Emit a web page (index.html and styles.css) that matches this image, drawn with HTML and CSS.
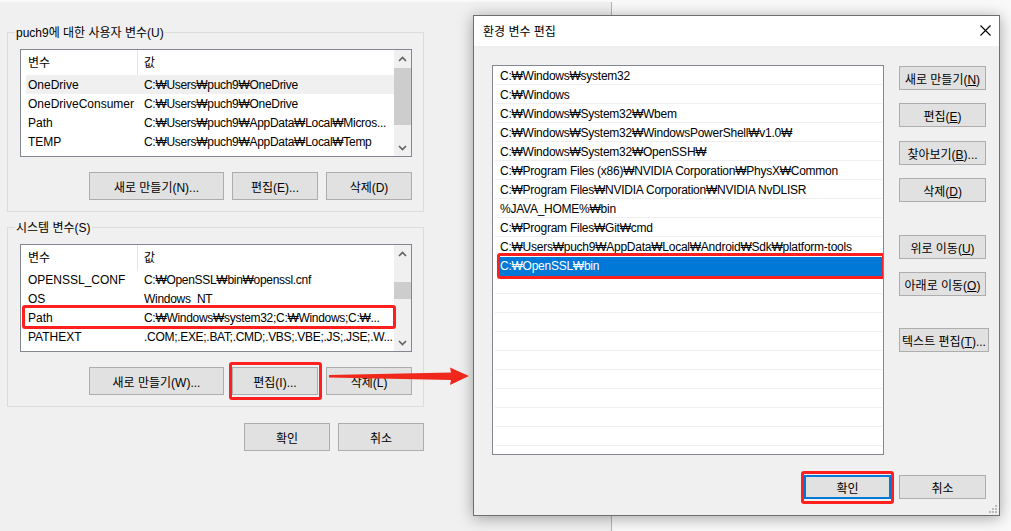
FILE: index.html
```html
<!DOCTYPE html>
<html lang="ko">
<head>
    <meta charset="UTF-8">
    <title>환경 변수 편집</title>
    <link rel="stylesheet" href="styles.css">
</head>
<body>

<div class="desktop">

    <!-- 환경 변수 창 (뒤쪽) -->
    <div class="main-window">

        <div class="group">
            <span class="group-title">puch9에 대한 사용자 변수(U)</span>
            <div class="listview">
                <div class="lv-body">
                    <div class="lv-header">
                        <span class="h-name">변수</span>
                        <span class="h-value">값</span>
                    </div>
                    <div class="lv-rows">
                        <div class="lv-row hot"><span class="c-name">OneDrive</span><span class="c-value">C:₩Users₩puch9₩OneDrive</span></div>
                        <div class="lv-row"><span class="c-name">OneDriveConsumer</span><span class="c-value">C:₩Users₩puch9₩OneDrive</span></div>
                        <div class="lv-row"><span class="c-name">Path</span><span class="c-value">C:₩Users₩puch9₩AppData₩Local₩Micros...</span></div>
                        <div class="lv-row"><span class="c-name">TEMP</span><span class="c-value">C:₩Users₩puch9₩AppData₩Local₩Temp</span></div>
                    </div>
                </div>
                <div class="scrollbar">
                    <div class="sb-btn"><svg width="9" height="6" viewBox="0 0 9 6"><path d="M1 5 L4.5 1.5 L8 5" fill="none" stroke="#606060" stroke-width="1.6"/></svg></div>
                    <div class="sb-track"><div class="sb-thumb thumb-user"></div></div>
                    <div class="sb-btn"><svg width="9" height="6" viewBox="0 0 9 6"><path d="M1 1 L4.5 4.5 L8 1" fill="none" stroke="#606060" stroke-width="1.6"/></svg></div>
                </div>
            </div>
            <div class="btn-row">
                <button class="btn wide">새로 만들기(N)...</button>
                <button class="btn">편집(E)...</button>
                <button class="btn">삭제(D)</button>
            </div>
        </div>

        <div class="group">
            <span class="group-title">시스템 변수(S)</span>
            <div class="listview">
                <div class="lv-body">
                    <div class="lv-header">
                        <span class="h-name">변수</span>
                        <span class="h-value">값</span>
                    </div>
                    <div class="lv-rows">
                        <div class="lv-row"><span class="c-name">OPENSSL_CONF</span><span class="c-value">C:₩OpenSSL₩bin₩openssl.cnf</span></div>
                        <div class="lv-row"><span class="c-name">OS</span><span class="c-value">Windows_NT</span></div>
                        <div class="lv-row marked-row"><span class="c-name">Path</span><span class="c-value">C:₩Windows₩system32;C:₩Windows;C:₩...</span></div>
                        <div class="lv-row"><span class="c-name">PATHEXT</span><span class="c-value">.COM;.EXE;.BAT;.CMD;.VBS;.VBE;.JS;.JSE;.W...</span></div>
                    </div>
                </div>
                <div class="scrollbar">
                    <div class="sb-btn"><svg width="9" height="6" viewBox="0 0 9 6"><path d="M1 5 L4.5 1.5 L8 5" fill="none" stroke="#606060" stroke-width="1.6"/></svg></div>
                    <div class="sb-track"><div class="sb-thumb thumb-system"></div></div>
                    <div class="sb-btn"><svg width="9" height="6" viewBox="0 0 9 6"><path d="M1 1 L4.5 4.5 L8 1" fill="none" stroke="#606060" stroke-width="1.6"/></svg></div>
                </div>
            </div>
            <div class="btn-row">
                <button class="btn wide">새로 만들기(W)...</button>
                <span class="marked"><button class="btn">편집(I)...</button></span>
                <button class="btn">삭제(L)</button>
            </div>
        </div>

        <div class="window-actions">
            <button class="btn">확인</button>
            <button class="btn">취소</button>
        </div>
    </div>

    <!-- 환경 변수 편집 대화 상자 -->
    <div class="edit-dialog">
        <div class="titlebar">
            <span class="title">환경 변수 편집</span>
            <svg class="close" width="11" height="11" viewBox="0 0 11 11"><path d="M0.5 0.5 L10.5 10.5 M10.5 0.5 L0.5 10.5" stroke="#000" stroke-width="1.1"/></svg>
        </div>
        <div class="dlg-body">
            <div class="dlg-main">
                <div class="path-list">
                    <div class="path-row">C:₩Windows₩system32</div>
                    <div class="path-row">C:₩Windows</div>
                    <div class="path-row">C:₩Windows₩System32₩Wbem</div>
                    <div class="path-row">C:₩Windows₩System32₩WindowsPowerShell₩v1.0₩</div>
                    <div class="path-row">C:₩Windows₩System32₩OpenSSH₩</div>
                    <div class="path-row">C:₩Program Files (x86)₩NVIDIA Corporation₩PhysX₩Common</div>
                    <div class="path-row">C:₩Program Files₩NVIDIA Corporation₩NVIDIA NvDLISR</div>
                    <div class="path-row">%JAVA_HOME%₩bin</div>
                    <div class="path-row">C:₩Program Files₩Git₩cmd</div>
                    <div class="path-row">C:₩Users₩puch9₩AppData₩Local₩Android₩Sdk₩platform-tools</div>
                    <div class="path-row selected">C:₩OpenSSL₩bin</div>
                    <div class="path-row"></div>
                    <div class="path-row"></div>
                    <div class="path-row"></div>
                    <div class="path-row"></div>
                    <div class="path-row"></div>
                    <div class="path-row"></div>
                    <div class="path-row"></div>
                    <div class="path-row"></div>
                    <div class="path-row"></div>
                </div>
                <div class="side-buttons">
                    <button class="btn small first">새로 만들기(<u>N</u>)</button>
                    <button class="btn small">편집(<u>E</u>)</button>
                    <button class="btn small gap14">찾아보기(<u>B</u>)...</button>
                    <button class="btn small">삭제(<u>D</u>)</button>
                    <button class="btn small gap-big">위로 이동(<u>U</u>)</button>
                    <button class="btn small">아래로 이동(<u>O</u>)</button>
                    <button class="btn small text-edit gap-big2">텍스트 편집(<u>T</u>)...</button>
                </div>
            </div>
            <div class="dlg-footer">
                <span class="marked ok-mark"><button class="btn small default">확인</button></span>
                <button class="btn small">취소</button>
            </div>
        </div>
        <svg class="grip" width="9" height="9" viewBox="0 0 9 9">
            <rect x="7" y="1" width="2" height="2" fill="#bcbcbc"/>
            <rect x="4" y="4" width="2" height="2" fill="#bcbcbc"/>
            <rect x="7" y="4" width="2" height="2" fill="#bcbcbc"/>
            <rect x="1" y="7" width="2" height="2" fill="#bcbcbc"/>
            <rect x="4" y="7" width="2" height="2" fill="#bcbcbc"/>
            <rect x="7" y="7" width="2" height="2" fill="#bcbcbc"/>
        </svg>
    </div>

    <svg class="arrow" width="1011" height="531" viewBox="0 0 1011 531">
        <polygon points="329,375 451,372.5 450,367.5 469,376 450,385 451,380 329,377.5" fill="#f0281c"/>
    </svg>
</div>

</body>
</html>
```

FILE: styles.css
```css
body {
    margin: 0;
    background: #f9f9f9;
    font-family: "Liberation Sans", "Noto Sans CJK KR", sans-serif;
    font-size: 12px;
    color: #000;
}
.desktop {
    position: relative;
    width: 1011px;
    height: 531px;
    overflow: hidden;
}

/* main window */
.main-window {
    margin-top: 2px;
    width: 612px;
    height: 529px;
    box-sizing: border-box;
    background: #f0f0f0;
    border-right: 1px solid #b4b4b4;
    padding: 30px 0 0 7px;
}
.group {
    position: relative;
    width: 417px;
    box-sizing: border-box;
    border: 1px solid #dcdcdc;
    padding: 16px 11px 11px 12px;
}
.group + .group {
    margin-top: 15px;
}
.group-title {
    position: absolute;
    top: -8px;
    left: 7px;
    padding: 0 1px;
    line-height: 16px;
    background: #f0f0f0;
}
.listview {
    display: flex;
    height: 108px;
    box-sizing: border-box;
    border: 1px solid #828790;
    background: #fff;
}
.lv-body {
    flex: 1;
    min-width: 0;
    position: relative;
}
.lv-header {
    display: flex;
    height: 25px;
    line-height: 26px;
}
.lv-header .h-name {
    width: 117px;
    box-sizing: border-box;
    padding-left: 7px;
    border-right: 1px solid #e5e5e5;
}
.lv-header .h-value {
    padding-left: 6px;
}
.lv-rows {
    padding-left: 5px;
}
.lv-row {
    position: relative;
    display: flex;
    height: 19px;
    line-height: 20px;
    white-space: nowrap;
}
.lv-row.hot {
    background: #f0f0f0;
}
.lv-row .c-name {
    width: 116px;
    flex-shrink: 0;
    box-sizing: border-box;
    padding-left: 2px;
    overflow: hidden;
}
.lv-row .c-value {
    flex: 1;
    min-width: 0;
    padding-left: 2px;
    letter-spacing: -0.3px;
    overflow: hidden;
}
.marked-row::after {
    content: "";
    position: absolute;
    top: -3px;
    left: -4px;
    right: -2px;
    bottom: -2px;
    border: 3px solid #ff1f1f;
    border-radius: 3px;
}
.scrollbar {
    width: 17px;
    flex-shrink: 0;
    display: flex;
    flex-direction: column;
    background: #f0f0f0;
}
.sb-btn {
    height: 17px;
    display: flex;
    align-items: center;
    justify-content: center;
}
.sb-track {
    flex: 1;
}
.sb-thumb {
    background: #cdcdcd;
}
.thumb-user {
    margin-top: 1px;
    height: 57px;
}
.thumb-system {
    margin-top: 20px;
    height: 17px;
}

/* buttons */
.btn {
    width: 86px;
    height: 28px;
    box-sizing: border-box;
    border: 1px solid #adadad;
    background: #e1e1e1;
    font: inherit;
    color: #000;
    padding: 0;
    white-space: nowrap;
}
.btn.wide {
    width: 135px;
}
.btn-row {
    display: flex;
    justify-content: flex-end;
    gap: 8px;
    margin-top: 15px;
}
.window-actions {
    width: 417px;
    display: flex;
    justify-content: flex-end;
    gap: 8px;
    margin-top: 16px;
}
.marked {
    position: relative;
    display: inline-flex;
}
.marked::after {
    content: "";
    position: absolute;
    top: -5px;
    left: -3px;
    right: -4px;
    bottom: -5px;
    border: 3px solid #ff1f1f;
    border-radius: 3px;
}

/* edit dialog */
.edit-dialog {
    position: absolute;
    left: 473px;
    top: 15px;
    width: 527px;
    height: 501px;
    box-sizing: border-box;
    border: 1px solid #6e6e6e;
    background: #f0f0f0;
    box-shadow: 0 2px 14px rgba(0, 0, 0, 0.35);
}
.titlebar {
    height: 30px;
    background: #fff;
    display: flex;
    align-items: center;
    justify-content: space-between;
    padding: 0 8px 1px 9px;
    box-sizing: border-box;
}
.dlg-body {
    padding: 19px 13px 16px 18px;
}
.dlg-main {
    display: flex;
    gap: 15px;
}
.path-list {
    width: 392px;
    height: 390px;
    box-sizing: border-box;
    border: 1px solid #828790;
    background: #fff;
    padding: 0 1px 0 2px;
    overflow: hidden;
}
.path-row {
    position: relative;
    height: 19px;
    box-sizing: border-box;
    line-height: 20px;
    padding-left: 5px;
    border-bottom: 1px solid #efefef;
    letter-spacing: -0.25px;
    white-space: nowrap;
}
.path-row.selected {
    margin: 1px 0 -1px 4px;
    padding-left: 1px;
    height: 19px;
    line-height: 19px;
    background: #0078d7;
    color: #fff;
    border-bottom: none;
}
.path-row.selected::after {
    content: "";
    position: absolute;
    top: -4px;
    left: -2px;
    right: -3px;
    bottom: -3px;
    border: 3px solid #ff1f1f;
    border-radius: 3px;
}
.side-buttons {
    width: 87px;
    display: flex;
    flex-direction: column;
    align-items: flex-start;
}
.btn.small {
    width: 87px;
    height: 24px;
    margin-top: 13px;
}
.btn.small.first {
    margin-top: 1px;
}
.btn.small.gap14 {
    margin-top: 14px;
}
.btn.small.gap-big {
    margin-top: 33px;
}
.btn.small.gap-big2 {
    margin-top: 32px;
}
.btn.text-edit {
    width: 90px;
}
.dlg-footer {
    display: flex;
    justify-content: flex-end;
    gap: 8px;
    margin-top: 20px;
}
.dlg-footer .btn.small {
    margin-top: 0;
}
.btn.default {
    border: 2px solid #0078d7;
}
.ok-mark::after {
    top: -4px;
    left: -3px;
    right: -3px;
    bottom: -5px;
}
.grip {
    position: absolute;
    right: 2px;
    bottom: 2px;
}
.arrow {
    position: absolute;
    left: 0;
    top: 0;
    pointer-events: none;
}
```
